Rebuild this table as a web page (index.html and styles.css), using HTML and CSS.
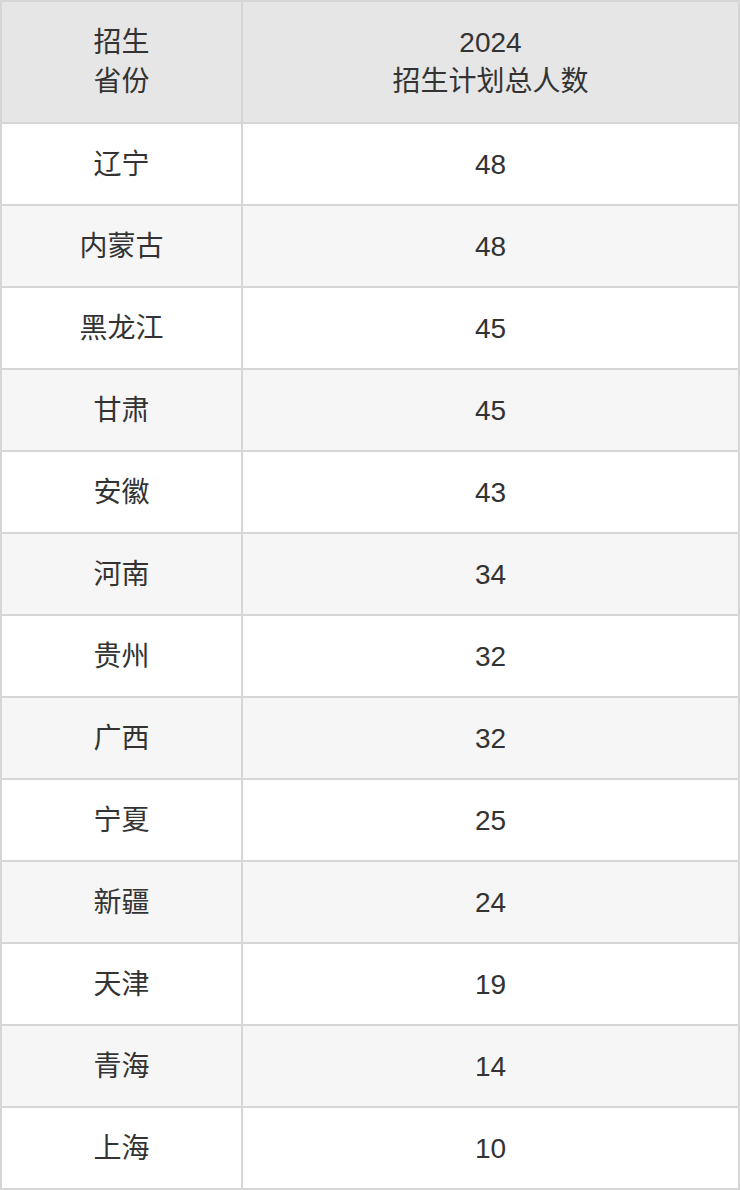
FILE: index.html
```html
<!DOCTYPE html>
<html lang="zh-CN">
<head>
<meta charset="utf-8">
<link rel="stylesheet" href="styles.css">
</head>
<body>
<table class="plan">
  <thead>
    <tr><th class="c1">招生<br>省份</th><th class="c2">2024<br>招生计划总人数</th></tr>
  </thead>
  <tbody>
    <tr><td>辽宁</td><td>48</td></tr>
    <tr><td>内蒙古</td><td>48</td></tr>
    <tr><td>黑龙江</td><td>45</td></tr>
    <tr><td>甘肃</td><td>45</td></tr>
    <tr><td>安徽</td><td>43</td></tr>
    <tr><td>河南</td><td>34</td></tr>
    <tr><td>贵州</td><td>32</td></tr>
    <tr><td>广西</td><td>32</td></tr>
    <tr><td>宁夏</td><td>25</td></tr>
    <tr><td>新疆</td><td>24</td></tr>
    <tr><td>天津</td><td>19</td></tr>
    <tr><td>青海</td><td>14</td></tr>
    <tr><td>上海</td><td>10</td></tr>
  </tbody>
</table>
</body>
</html>
```
FILE: styles.css
```css
html, body {
  margin: 0;
  padding: 0;
  background: #ffffff;
}
.plan {
  border-collapse: collapse;
  width: 740px;
  table-layout: fixed;
  font-family: "Liberation Sans", "Noto Sans CJK SC", sans-serif;
  font-size: 28px;
  line-height: 39px;
  color: #333333;
}
.plan th, .plan td {
  border: 2px solid #d6d6d6;
  text-align: center;
  vertical-align: middle;
  padding: 0;
  font-weight: normal;
}
.plan th {
  background: #e6e6e6;
  height: 120px;
}
.plan .c1 { width: 239px; }
.plan td {
  height: 80px;
}
.plan tbody tr:nth-child(even) td {
  background: #f6f6f6;
}
```
